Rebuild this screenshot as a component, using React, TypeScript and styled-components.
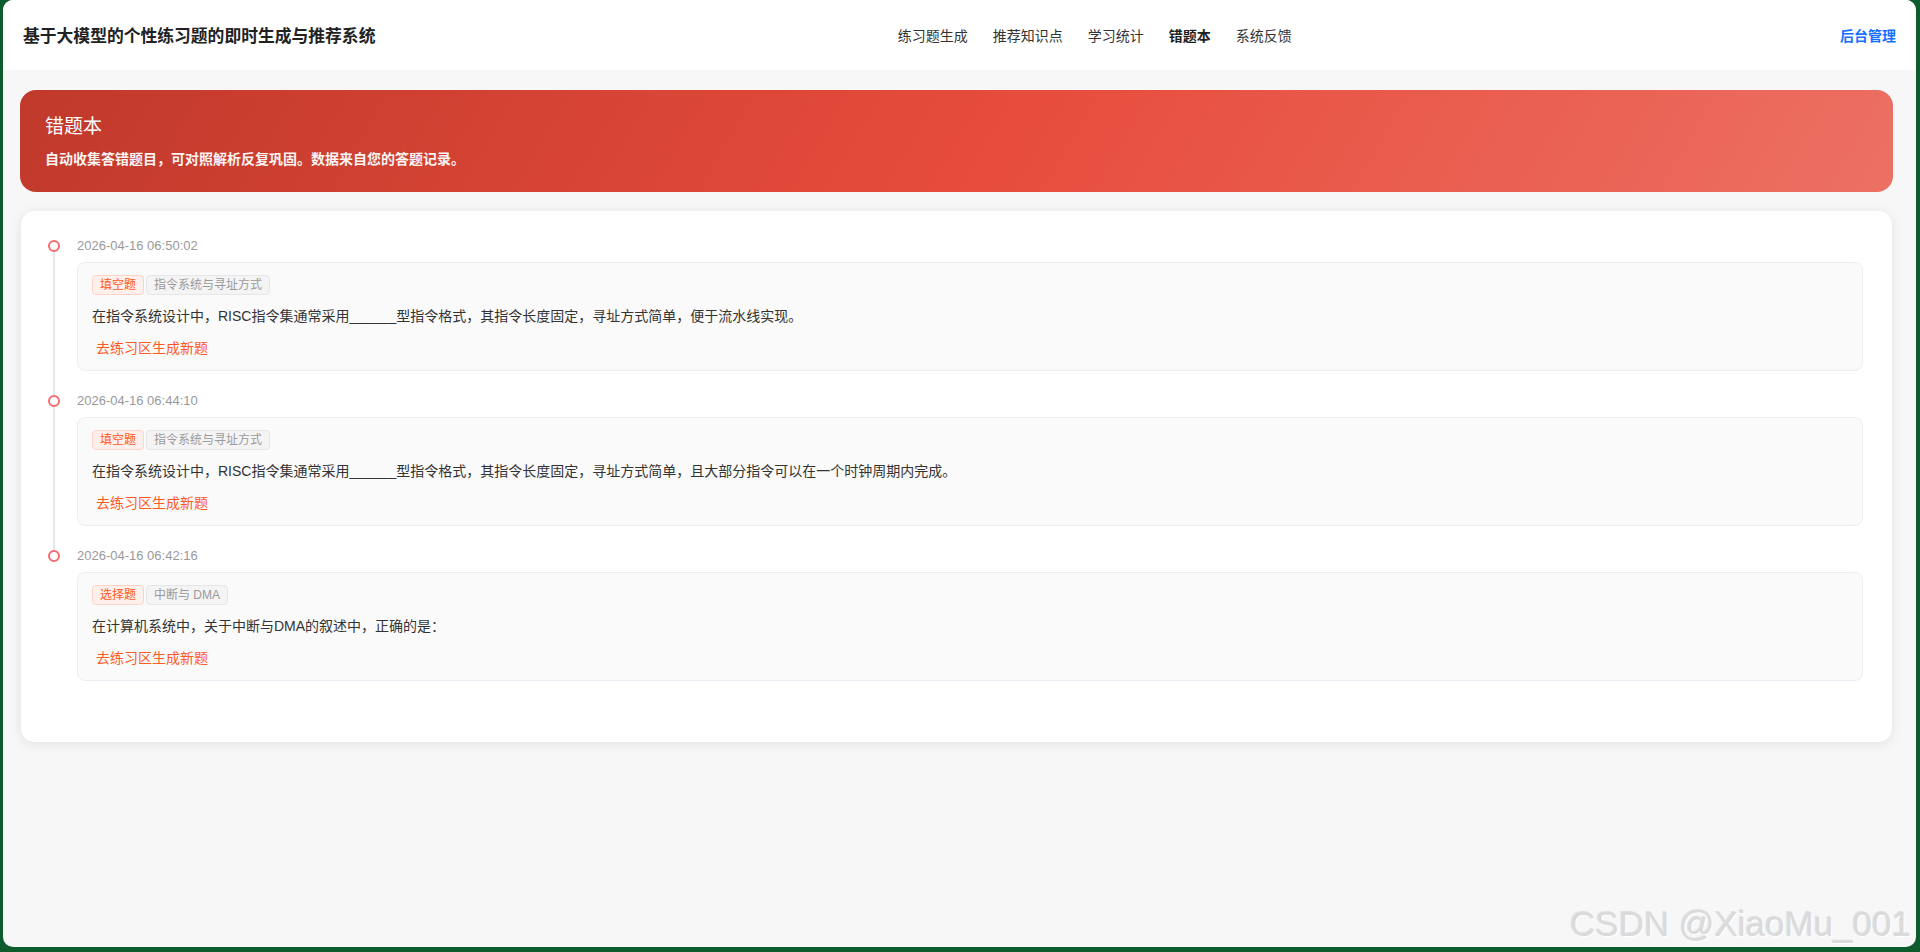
import React from "react";
import styled, { createGlobalStyle } from "styled-components";

const GlobalStyle = createGlobalStyle`
  * { box-sizing: border-box; }
  html, body { margin: 0; padding: 0; }
  body {
    background: #0e5b2d;
    font-family: "Liberation Sans", "Noto Sans CJK SC", sans-serif;
    color: #333;
  }
`;

const Frame = styled.div`
  position: relative;
  margin-left: 3px;
  width: 1913px;
  height: 947px;
  border-radius: 10px;
  overflow: hidden;
  background: #f7f7f7;
  display: flex;
  flex-direction: column;
`;

const Header = styled.header`
  height: 70px;
  flex-shrink: 0;
  display: flex;
  align-items: center;
  padding: 0 20px;
  background: #fff;
`;

const Brand = styled.div`
  font-size: 16.8px;
  font-weight: 700;
  color: #222;
  font-family: "Noto Sans CJK SC", sans-serif;
  white-space: nowrap;
`;

const Nav = styled.nav`
  flex: 1;
  display: flex;
  justify-content: center;
  gap: 25px;
  padding-right: 26px;
`;

const NavItem = styled.a<{ $active?: boolean }>`
  font-family: "Noto Sans CJK SC", sans-serif;
  font-size: 14px;
  color: ${(p) => (p.$active ? "#1f1f1f" : "#333")};
  font-weight: ${(p) => (p.$active ? 700 : 400)};
  text-decoration: none;
  cursor: pointer;
`;

const AdminLink = styled.a`
  font-family: "Noto Sans CJK SC", sans-serif;
  font-size: 14px;
  font-weight: 700;
  color: #1670ff;
  text-decoration: none;
`;

const Main = styled.main`
  flex: 1;
  padding: 20px 23px 0 17px;
  display: flex;
  flex-direction: column;
  gap: 19px;
`;

const Banner = styled.section`
  border-radius: 16px;
  padding: 22px 25px 24px;
  color: #fff;
  background: linear-gradient(120deg, #c0392b 0%, #e74c3c 52%, #ec7063 100%);
`;

const BannerTitle = styled.h2`
  margin: 0 0 10px;
  font-family: "Noto Sans CJK SC", sans-serif;
  font-size: 19px;
  line-height: 26px;
  font-weight: 400;
`;

const BannerText = styled.p`
  margin: 0;
  font-family: "Noto Sans CJK SC", sans-serif;
  font-size: 14px;
  line-height: 20px;
  font-weight: 600;
  opacity: 0.95;
`;

const Panel = styled.section`
  margin: 0 1px;
  background: #fff;
  border-radius: 14px;
  box-shadow: 0 2px 12px rgba(0, 0, 0, 0.09);
  padding: 25px 29px 41px 56px;
`;

const Timeline = styled.ul`
  list-style: none;
  margin: 0;
  padding: 0;
`;

const Entry = styled.li<{ $last?: boolean }>`
  position: relative;
  margin-bottom: 20px;

  &::before {
    content: "";
    display: ${(p) => (p.$last ? "none" : "block")};
    position: absolute;
    left: -24px;
    top: 10px;
    bottom: -30px;
    width: 2px;
    background: #e4e7ed;
  }
`;

const Dot = styled.span`
  position: absolute;
  left: -29px;
  top: 4px;
  width: 12px;
  height: 12px;
  border-radius: 50%;
  border: 2px solid #f56c6c;
  background: #fff;
  z-index: 1;
`;

const Stamp = styled.div`
  font-size: 13px;
  line-height: 20px;
  color: #999;
  margin-bottom: 6px;
`;

const ItemCard = styled.div`
  background: #fafafa;
  border: 1px solid #ebeef5;
  border-radius: 8px;
  padding: 12px 14px 9px;
`;

const Tags = styled.div`
  display: flex;
  gap: 2px;
  margin-bottom: 9px;
`;

const Tag = styled.span<{ $tone: "type" | "topic" }>`
  height: 20px;
  line-height: 18px;
  padding: 0 7px;
  font-size: 12px;
  border-radius: 4px;
  font-family: "Liberation Sans", "Noto Sans CJK SC", sans-serif;
  border: 1px solid ${(p) => (p.$tone === "type" ? "#ffd4c6" : "#e6e6e8")};
  background: ${(p) => (p.$tone === "type" ? "#fff0eb" : "#f4f4f5")};
  color: ${(p) => (p.$tone === "type" ? "#ff5722" : "#9a9a9a")};
`;

const Question = styled.p`
  margin: 0;
  font-size: 14px;
  line-height: 24px;
  color: #333;
`;

const PracticeLink = styled.button`
  display: block;
  margin-top: 5px;
  height: 28px;
  padding: 0 4px;
  border: none;
  background: none;
  font-family: "Noto Sans CJK SC", sans-serif;
  font-size: 14px;
  color: #ff5a1f;
  cursor: pointer;
`;

const Watermark = styled.div`
  position: absolute;
  right: 5px;
  bottom: 3px;
  font-family: "Liberation Sans", sans-serif;
  font-size: 35px;
  color: #dadada;
  text-shadow: 1px 1px 1px #fff, -1px -1px 1px rgba(0, 0, 0, 0.1);
  pointer-events: none;
`;

type Mistake = {
  time: string;
  type: string;
  topic: string;
  question: string;
};

const mistakes: Mistake[] = [
  {
    time: "2026-04-16 06:50:02",
    type: "填空题",
    topic: "指令系统与寻址方式",
    question:
      "在指令系统设计中，RISC指令集通常采用______型指令格式，其指令长度固定，寻址方式简单，便于流水线实现。",
  },
  {
    time: "2026-04-16 06:44:10",
    type: "填空题",
    topic: "指令系统与寻址方式",
    question:
      "在指令系统设计中，RISC指令集通常采用______型指令格式，其指令长度固定，寻址方式简单，且大部分指令可以在一个时钟周期内完成。",
  },
  {
    time: "2026-04-16 06:42:16",
    type: "选择题",
    topic: "中断与 DMA",
    question: "在计算机系统中，关于中断与DMA的叙述中，正确的是：",
  },
];

const navItems = ["练习题生成", "推荐知识点", "学习统计", "错题本", "系统反馈"];

export default function App() {
  return (
    <>
      <GlobalStyle />
      <Frame>
        <Header>
          <Brand>基于大模型的个性练习题的即时生成与推荐系统</Brand>
          <Nav>
            {navItems.map((n) => (
              <NavItem key={n} $active={n === "错题本"}>
                {n}
              </NavItem>
            ))}
          </Nav>
          <AdminLink>后台管理</AdminLink>
        </Header>
        <Main>
          <Banner>
            <BannerTitle>错题本</BannerTitle>
            <BannerText>自动收集答错题目，可对照解析反复巩固。数据来自您的答题记录。</BannerText>
          </Banner>
          <Panel>
            <Timeline>
              {mistakes.map((m, i) => (
                <Entry key={m.time} $last={i === mistakes.length - 1}>
                  <Dot />
                  <Stamp>{m.time}</Stamp>
                  <ItemCard>
                    <Tags>
                      <Tag $tone="type">{m.type}</Tag>
                      <Tag $tone="topic">{m.topic}</Tag>
                    </Tags>
                    <Question>{m.question}</Question>
                    <PracticeLink>去练习区生成新题</PracticeLink>
                  </ItemCard>
                </Entry>
              ))}
            </Timeline>
          </Panel>
        </Main>
        <Watermark>CSDN @XiaoMu_001</Watermark>
      </Frame>
    </>
  );
}
